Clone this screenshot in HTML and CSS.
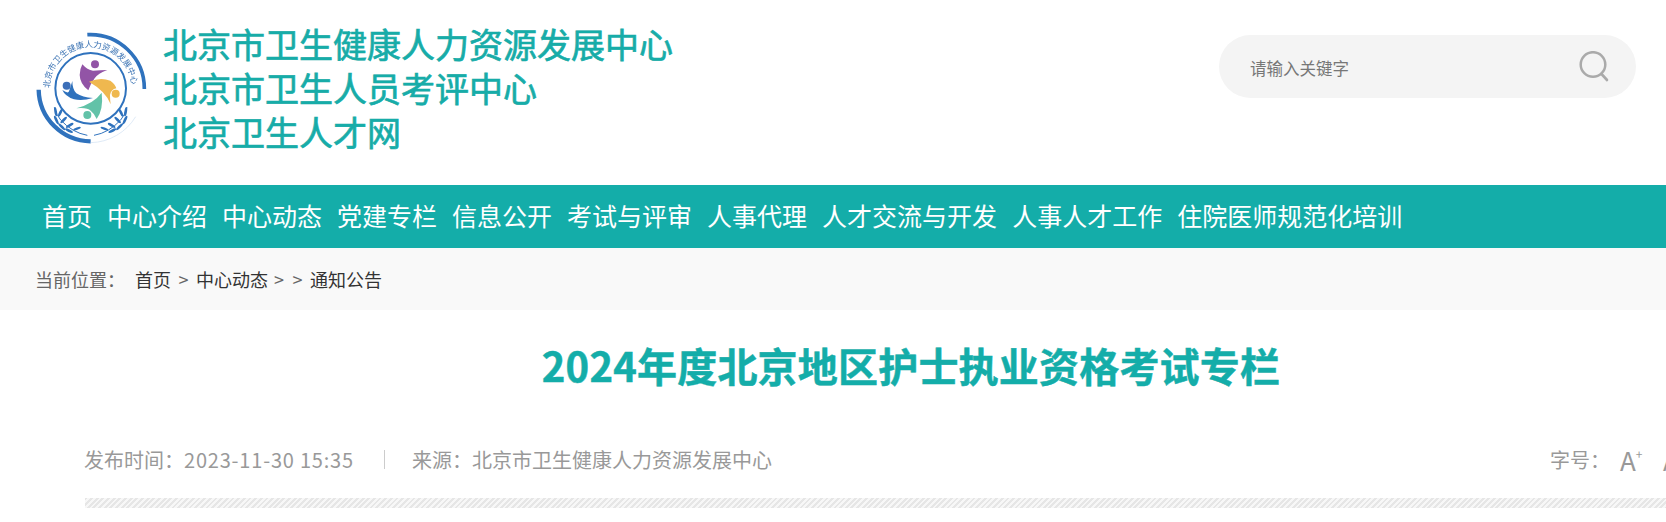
FILE: index.html
```html
<!DOCTYPE html>
<html lang="zh-CN">
<head>
    <meta charset="UTF-8">
    <title>2024年度北京地区护士执业资格考试专栏</title>
    <link rel="stylesheet" href="styles.css">
</head>
<body>
    <div class="header">
        <div class="brand">
            <svg class="logo" viewBox="45 36 339 345">
                <defs>
                    <path id="ringText" d="M92 205 A123 123 0 0 1 338 205"/>
                    <g id="wreath" fill="#2f72bd">
                        <path d="M205 346 Q160 338 125 300 Q112 285 106 262" fill="none" stroke="#2f72bd" stroke-width="3"/>
                        <ellipse cx="110" cy="275" rx="4" ry="14" transform="rotate(-10 110 275)"/>
                        <ellipse cx="124" cy="278" rx="4" ry="13" transform="rotate(25 124 278)"/>
                        <ellipse cx="112" cy="300" rx="4" ry="14" transform="rotate(-25 112 300)"/>
                        <ellipse cx="134" cy="300" rx="4" ry="13" transform="rotate(45 134 300)"/>
                        <ellipse cx="128" cy="320" rx="4" ry="14" transform="rotate(-45 128 320)"/>
                        <ellipse cx="152" cy="316" rx="4" ry="13" transform="rotate(60 152 316)"/>
                        <ellipse cx="150" cy="332" rx="4" ry="13" transform="rotate(-65 150 332)"/>
                        <ellipse cx="174" cy="326" rx="3.5" ry="12" transform="rotate(70 174 326)"/>
                    </g>
                </defs>
                <path d="M205 44 A162 162 0 0 1 376 207" fill="none" stroke="#2f72bd" stroke-width="11"/>
                <path d="M59 209 A158 158 0 0 0 215 364" fill="none" stroke="#2f72bd" stroke-width="13"/>
                <path d="M215 368 A162 162 0 0 0 350 290" fill="none" stroke="#cfe0f1" stroke-width="2"/>
                <circle cx="215" cy="205" r="106" fill="none" stroke="#2f72bd" stroke-width="6"/>
                <text class="logo-ring"><textPath href="#ringText">北京市卫生健康人力资源发展中心</textPath></text>
                <path d="M190 133 Q205 150 222 152 Q245 150 265 150 Q237 160 227 175 Q214 192 208 211 Q183 192 182 165 Q182 148 190 133Z" fill="#9254a6"/>
                <circle cx="228" cy="133" r="12" fill="#9254a6"/>
                <path d="M210 185 Q245 170 274 182 Q288 192 292 205 Q276 208 273 225 Q273 240 275 253 Q262 215 210 185Z" fill="#efb84f"/>
                <circle cx="290" cy="221" r="12" fill="#efb84f"/>
                <path d="M248 218 Q225 250 172 265 Q205 262 215 272 Q226 280 233 297 Q254 268 248 218Z" fill="#62c2a8"/>
                <circle cx="205" cy="285" r="12" fill="#62c2a8"/>
                <path d="M160 183 Q160 208 172 220 Q190 232 222 234 Q190 244 165 238 Q138 229 130 210 Q148 222 150 214 Q155 200 160 183Z" fill="#2f72bd"/>
                <circle cx="143" cy="197" r="12" fill="#3c6fb8"/>
                <use href="#wreath"/>
                <use href="#wreath" transform="translate(430 0) scale(-1 1)"/>
            </svg>
            <div class="brand-names">
                <div>北京市卫生健康人力资源发展中心</div>
                <div>北京市卫生人员考评中心</div>
                <div>北京卫生人才网</div>
            </div>
        </div>
        <div class="search">
            <span class="search-hint">请输入关键字</span>
            <svg class="search-icon" width="30" height="32" viewBox="0 0 30 32">
                <circle cx="14" cy="13.500" r="12.300" fill="none" stroke="#aaa" stroke-width="2.500"/>
                <path d="M22.500 23 L28 29" fill="none" stroke="#aaa" stroke-width="2.600" stroke-linecap="round"/>
            </svg>
        </div>
    </div>

    <div class="nav">
        <a href="#">首页</a>
        <a href="#">中心介绍</a>
        <a href="#">中心动态</a>
        <a href="#">党建专栏</a>
        <a href="#">信息公开</a>
        <a href="#">考试与评审</a>
        <a href="#">人事代理</a>
        <a href="#">人才交流与开发</a>
        <a href="#">人事人才工作</a>
        <a href="#">住院医师规范化培训</a>
    </div>

    <div class="crumbs">
        <span class="crumbs-label">当前位置：</span>
        <a href="#">首页</a>
        <span class="arrow">&gt;</span>
        <a href="#">中心动态</a>
        <span class="arrow arrow-tight">&gt;</span>
        <span class="arrow">&gt;</span>
        <a href="#">通知公告</a>
    </div>

    <div class="article">
        <h1 class="article-title">2024年度北京地区护士执业资格考试专栏</h1>
        <div class="meta">
            <div class="meta-left">
                <span>发布时间：<span class="meta-date">2023-11-30 15:35</span></span>
                <span class="meta-sep"></span>
                <span>来源：北京市卫生健康人力资源发展中心</span>
            </div>
            <div class="meta-right">
                <span>字号：</span>
                <span class="size-btn">A<sup>+</sup></span>
                <span class="size-btn">A<sup>-</sup></span>
            </div>
        </div>
        <div class="hatch"></div>
    </div>
</body>
</html>
```

FILE: styles.css
```css
html, body {
    margin: 0;
    height: 100%;
    overflow: hidden;
}
body {
    font-family: "Noto Sans CJK SC", "Noto Sans", sans-serif;
    background-color: #fff;
}
a {
    color: inherit;
    text-decoration: none;
}
.header {
    height: 185px;
    display: flex;
    justify-content: space-between;
    box-sizing: border-box;
    padding: 20px 30px 0 34px;
}
.brand {
    display: flex;
    gap: 16px;
}
.logo {
    width: 113px;
    height: 115px;
    margin-top: 12px;
    filter: blur(0.5px);
}
.logo-ring {
    font-size: 25px;
    fill: #3f76b5;
}
.brand-names {
    padding-top: 2px;
    color: #17aca8;
    font-size: 34px;
    line-height: 44px;
    -webkit-text-stroke: 0.7px #17aca8;
    white-space: nowrap;
}
.search {
    width: 417px;
    height: 63px;
    margin-top: 15px;
    box-sizing: border-box;
    padding: 0 27px 0 31px;
    display: flex;
    align-items: center;
    justify-content: space-between;
    background-color: #f4f4f4;
    border-radius: 32px;
}
.search-hint {
    font-size: 16.500px;
    color: #777;
    padding-top: 2px;
}
.nav {
    height: 63px;
    box-sizing: border-box;
    padding: 0 0 4px 42px;
    display: flex;
    align-items: center;
    gap: 15px;
    background-color: #14ada9;
    color: #fff;
    font-size: 25px;
    white-space: nowrap;
}
.crumbs {
    height: 62px;
    display: flex;
    align-items: center;
    padding-left: 35px;
    background-color: #f9f9f9;
    color: #666;
    font-size: 18px;
}
.crumbs a {
    color: #333;
}
.crumbs-label {
    margin-right: 10px;
}
.crumbs .arrow {
    margin: 0 7.500px;
}
.crumbs .arrow-tight {
    margin: 0 1px 0 6px;
}
.article {
    width: 1654px;
    margin-left: 84px;
}
.article-title {
    margin: 27px 0 0;
    text-align: center;
    color: #14ada9;
    font-size: 40px;
    font-weight: 700;
    line-height: 56px;
    letter-spacing: 0.2px;
    -webkit-text-stroke: 0.5px #14ada9;
}
.meta {
    height: 40px;
    margin-top: 46px;
    display: flex;
    align-items: center;
    justify-content: space-between;
    color: #999;
    font-size: 20px;
}
.meta-left {
    display: flex;
    align-items: center;
}
.meta-date {
    letter-spacing: 0.8px;
}
.meta-sep {
    width: 1px;
    height: 19px;
    margin: 0 27px 0 30px;
    background-color: #ccc;
}
.meta-right {
    display: flex;
    align-items: center;
    padding-right: 42px;
}
.size-btn {
    font-size: 26px;
    margin-left: 10px;
    width: 33px;
}
.size-btn sup {
    font-size: 12px;
    vertical-align: 12px;
    line-height: 0;
}
.hatch {
    height: 10px;
    margin: 19px 0 0 1px;
    background: repeating-linear-gradient(135deg, #e6e6e6 0, #e6e6e6 2px, #f7f7f7 2px, #f7f7f7 4px);
}
```
